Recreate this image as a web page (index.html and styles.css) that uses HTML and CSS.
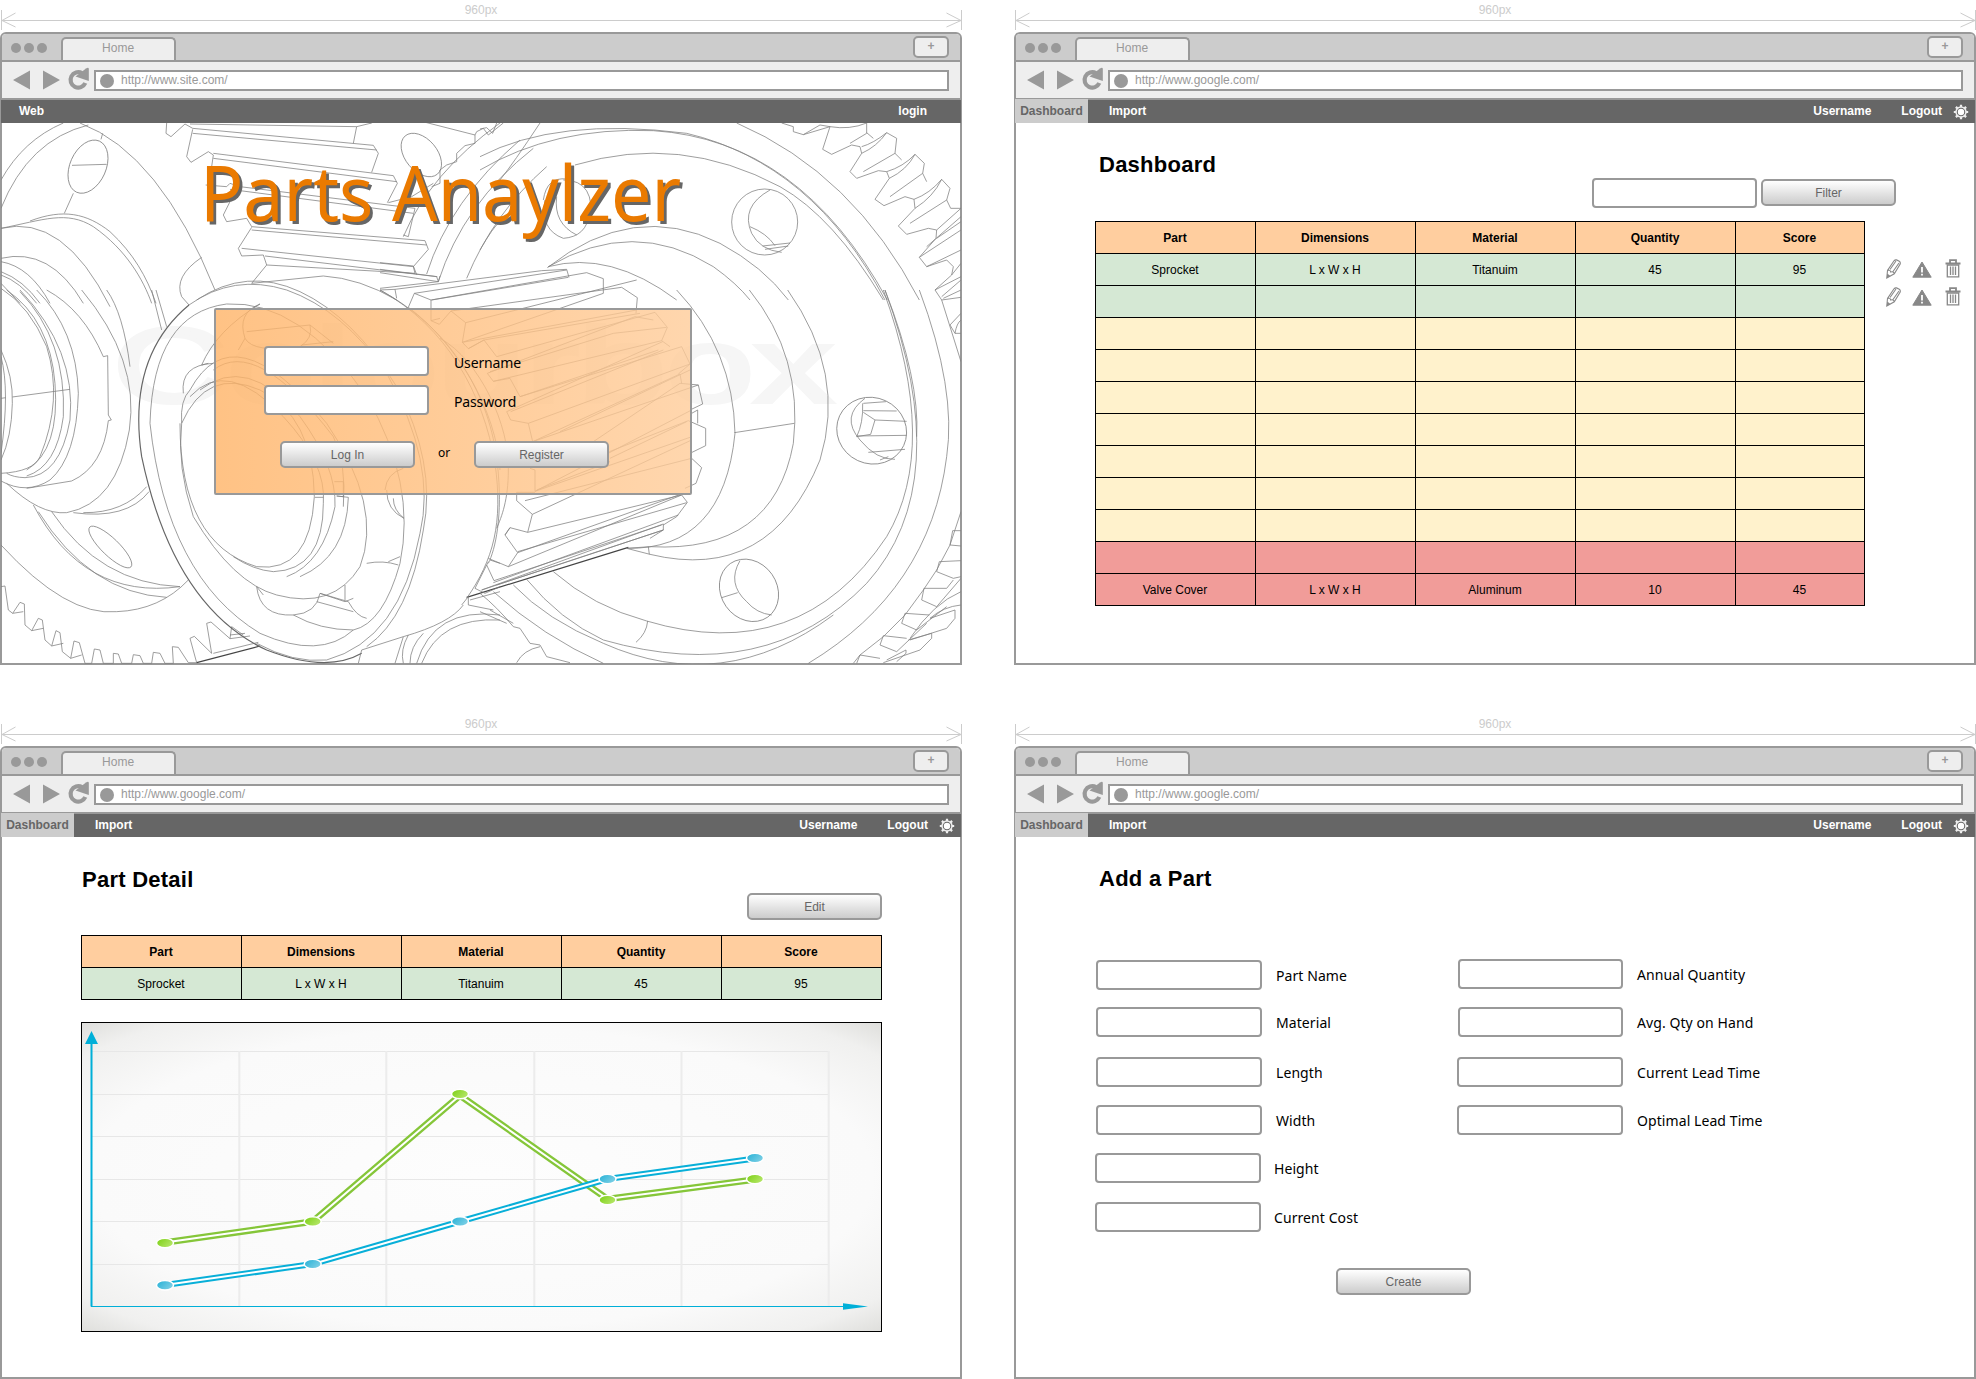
FILE: index.html
```html
<!DOCTYPE html>
<html lang="en">
<head>
<meta charset="utf-8">
<title>Parts Anaylzer</title>
<link rel="stylesheet" href="styles.css">
</head>
<body>
<svg width="0" height="0" class="defs">
  <symbol id="ruler" viewBox="0 0 962 32"><path d="M1.500 10V30M961.500 10V30M1 20.500H961M15.500 13L2 20.500L15.500 27M946.500 13L961 20.500L946.500 27" fill="none" stroke="#ccc"/></symbol>
  <symbol id="nav-icons" viewBox="0 0 80 26"><path d="M2 13L19 3.500V22.500ZM49 13L32 3.500V22.500Z" fill="#999"/><path d="M71 6.200A7.700 7.700 0 1 0 74.300 16" fill="none" stroke="#999" stroke-width="4.200"/><path d="M64.500 9.500L75 1.500Q77.800 0 77.800 2V14Z" fill="#999"/></symbol>
  <symbol id="cog" viewBox="0 0 16 16"><path d="M8 .8V15.200M.8 8H15.200M2.900 2.900L13.100 13.100M13.100 2.900L2.900 13.100" stroke="#eee" stroke-width="2.200"/><circle cx="8" cy="8" r="5" fill="#666" stroke="#eee" stroke-width="1.500"/><circle cx="8" cy="8" r="3.200" fill="#fff"/></symbol>
  <symbol id="pencil" viewBox="0 0 15 20"><path d="M.8 19L1.500 11.500L8 1.800Q9 .6 10.500 .9L13.300 2.200Q14.700 3.200 14.200 5L8.300 14.800ZM1.500 11.500Q4.300 10.500 4.700 13Q7.500 12 8.300 14.800M4 10.500L10 2M7 12.500L13 4" fill="none" stroke="#888" stroke-width="1.100"/><path d="M.8 19L1.200 14.500L4.500 17Z" fill="#888"/></symbol>
  <symbol id="warn" viewBox="0 0 20 17"><path d="M10 1L19.200 16.200H.8Z" fill="#888" stroke="#888" stroke-linejoin="round"/><path d="M10 6V11.500M10 12.800V14.600" stroke="#fff" stroke-width="1.800"/></symbol>
  <symbol id="trash" viewBox="0 0 16 19"><path d="M.5 4.500H15.500M5 3.800V1.200H11V3.800" fill="none" stroke="#888" stroke-width="1.800"/><path d="M2.300 6H13.700V17.800H2.300ZM5.500 7.500V16M8 7.500V16M10.500 7.500V16" fill="none" stroke="#888" stroke-width="1.300"/></symbol>
</svg>

<main class="board">

<section class="screen">
  <div class="ruler"><svg><use href="#ruler"/></svg><span>960px</span></div>
  <div class="window">
    <div class="tabs"><i></i><i></i><i></i><span class="tab">Home</span><span class="plus">+</span></div>
    <div class="tools"><svg class="arrows"><use href="#nav-icons"/></svg><div class="url"><i></i><span>http://www.site.com/</span></div></div>
    <nav class="nav login-nav"><b>Web</b><b>login</b></nav>
    <div class="hero">
      <svg class="art" viewBox="0 0 960 541" fill="none" stroke="#808080" stroke-width="2.300">
        <text x="112" y="279" textLength="720" lengthAdjust="spacingAndGlyphs" class="mark">Colourbox</text>
        <!-- upper left -->
        <g transform="translate(-1 -123) scale(.33333)">
          <path d="M3 540Q70 420 190 369M3 625Q85 420 265 375M240 369Q480 460 645 870M193 640L220 580M303 418L308 400M216 496L320 493"/>
          <ellipse cx="264" cy="500" rx="54" ry="84" transform="rotate(24 264 500)"/>
          <path d="M3 685C130 660 200 630 280 680C380 750 430 840 455 910M90 663C190 625 260 640 330 695C400 760 440 830 468 910M3 685Q190 640 330 920M3 775Q150 740 250 910M3 785Q90 800 150 910M3 815Q70 840 120 910M3 825Q60 845 110 910M3 850L60 910"/>
          <path d="M605 772Q520 830 545 890L567 915M500 369L498 400L513 410L555 372L578 385L1120 436L1135 460L1115 517M570 372L1070 380L1060 430M1070 380L1115 369M578 400L1130 450M578 388L560 470L573 487L625 455L640 465L635 500M640 460L1180 527L1192 550L1162 608M640 475L1190 545"/>
          <path d="M617 555L680 560L690 550L720 560L1245 625L1225 710L1210 705M690 568L1240 640M690 605L670 645L680 665L740 655L755 680L1275 722L1285 748L1240 800L1245 820M755 690L1280 735M755 682L715 745L725 768L790 765L800 795L755 850M725 745L1240 800M795 768L1310 830L1315 845M800 795L1245 820M755 850L970 828Q1080 835 1190 900M1165 608L1235 590M1235 590L1300 550"/>
          <ellipse cx="1264" cy="465" rx="48" ry="75" transform="rotate(-40 1264 465)"/>
          <path d="M1110 369L1210 350L1425 405L1430 395L1450 385L1465 405L1510 369M1425 405L1425 430L1395 437L1370 460V485L1340 495L1320 510V550L1295 560M1210 710Q1290 520 1500 369M1280 822Q1350 600 1560 420M1315 845Q1390 610 1600 445M1400 835Q1480 640 1640 500"/>
        </g>
        <!-- upper right -->
        <g transform="translate(479 -123) scale(.33333)">
          <path d="M0 470Q230 350 620 400Q1000 490 1215 900M0 510Q220 380 520 392Q960 420 1222 900M60 540Q100 490 180 369M285 495Q600 400 900 560Q1060 650 1210 900M0 750Q40 680 60 665M770 369Q1120 520 1318 900M202 803Q460 600 720 730Q850 800 925 900M205 800Q460 650 700 800Q770 850 810 900M205 800Q390 750 590 900"/>
          <circle cx="854" cy="666" r="99"/><path d="M870 570Q780 620 815 700Q840 750 905 757M810 680Q860 700 885 737M848 738L930 729M855 748L925 738M195 600Q180 690 250 715Q320 710 328 640M250 540Q350 540 330 670M190 600Q200 530 260 537M230 590Q220 670 290 705"/>
          <path d="M905 369L940 380V395L970 404L1050 380L1020 375L970 404M1050 380L1028 448L1055 463L1115 435L1140 440L1145 460L1110 515L1130 535L1195 512L1220 515L1228 535L1185 598L1212 617L1275 590L1302 598L1305 625L1255 678L1280 703L1345 685L1370 690L1368 715L1318 772L1340 800L1400 780L1420 800L1415 825L1365 870L1385 900"/>
          <path d="M1145 460Q1190 440 1220 398L1250 415L1245 460L1150 515M1145 440Q1180 430 1220 398M1160 369V400L1110 430M1160 398L1180 415M1228 535Q1280 510 1305 463L1333 490L1328 520L1230 590M1220 515Q1270 500 1305 463M1245 460L1265 480M1305 625Q1360 590 1385 538L1410 565L1400 600L1290 670M1302 598Q1350 580 1385 538M1328 520L1340 545M1370 715L1443 665M1370 690L1443 625H1412L1400 600M1340 740L1443 650M1415 825L1443 790M1340 800L1443 750M1318 772L1443 690M1365 870L1443 830M1385 900L1443 892M1050 380Q1110 390 1160 369M0 387L20 383L38 400L50 369"/>
        </g>
        <!-- pinion teeth and shaft edge -->
        <g transform="translate(379 127) scale(.33333)">
          <path d="M0 120L45 118L485 62L560 58L567 82M45 118L50 145M0 115L175 95L180 78M0 68L175 95M0 58L172 80M0 38L100 48L110 74M85 172L103 130L153 150L620 68L670 86V130M103 130L560 60M153 150V212L178 223L213 183L257 218L247 277L265 296L312 270L350 320M153 212L180 205M213 183L725 112L772 143L768 190M257 218L770 90M155 150L565 82M247 277L770 180M247 277L670 130M265 296L312 270L780 190"/>
          <path d="M350 320L825 187L862 232L845 272M322 370L765 200L820 210M322 370L340 394L390 385L420 440L905 290L930 342L895 372M330 365L700 250L860 232M340 394L845 272L870 290M380 485L848 275M380 485L392 510L445 520L458 575L955 405L968 462L930 480M420 440L835 300M392 485L850 300M445 520L930 342M458 575L900 372L905 400M540 545L930 360M640 575L900 400L955 405"/>
          <path d="M688 605L925 512L977 535V587L930 610M690 625L920 515M465 660V724L935 480M450 655L465 660M465 724L930 562M470 720L690 635M410 727H465M410 727V752L457 793L935 570M457 793L443 847L390 833L375 855L413 908L910 730M435 752L935 625L965 653L948 700L915 715M443 847L905 735L922 757L890 800L850 825M375 855L390 833M413 908L385 950L325 925M385 950L905 735M413 905L920 758M305 1020L850 822V840L810 865M320 945L342 992L845 825M340 998L895 795M350 1005L850 840M305 1020L850 840M935 490L953 480V520"/>
          <path d="M260 1042L745 892" stroke="#444" stroke-width="3.500"/>
          <path d="M0 120C200 230 310 430 345 640C370 820 340 930 260 1045M0 120C220 240 330 440 352 640C370 800 345 900 325 940M180 265C300 330 390 530 385 660C385 750 365 800 350 835M85 172C230 280 350 480 360 660"/>
        </g>
        <!-- lower left -->
        <g transform="translate(-1 167) scale(.33333)">
          <path d="M3 -5Q90 50 140 170Q190 330 120 500Q100 545 3 550M20 0Q150 90 165 280Q180 480 80 540M60 0Q230 180 210 390Q180 560 75 563Q40 562 20 550M60 5Q200 150 190 380Q170 530 80 558M110 0Q230 120 235 310Q230 500 150 570Q80 615 3 573M245 0Q420 210 388 420Q350 640 200 668Q120 675 20 580M320 0Q370 70 390 230M140 0Q250 60 310 200L323 197L325 375L334 390L325 392Q310 530 215 573L80 595M3 180Q40 260 37 340Q35 440 3 510M3 200Q30 300 3 490M3 325L18 323M37 321L210 298"/>
          <path d="M455 0L485 120M468 0L500 110M100 645Q250 930 540 890M155 665Q300 880 540 890M115 665Q270 910 500 922M3 765Q200 980 350 965Q480 960 565 870M250 668Q370 670 440 590M220 668Q380 690 447 605"/>
          <ellipse cx="331" cy="771" rx="26" ry="86" transform="rotate(-46 331 771)"/>
          <path d="M3 890L15 888L25 960L38 970L60 937L73 942L75 1005L95 1022L115 985L127 990L135 1050L155 1068L168 1022L180 1028L187 1085L212 1105L222 1053L238 1058L255 1120H275L283 1077L300 1080L310 1120H340V1090L355 1092L365 1120H395L400 1094L420 1097L430 1120H455L460 1087L480 1090L495 1120H520L517 1070L535 1072L565 1118H590L570 1045L583 1039L635 1090L620 1000L633 996L690 1046L695 1010L730 1035M38 970L70 965M95 1022L130 1015M155 1068L190 1060M212 1105L245 1095M690 1046L750 1038M690 1035L735 1030M640 1090L775 1057"/>
          <path d="M590 1118L780 1068" stroke="#444" stroke-width="3.500"/>
          <path d="M567 45Q380 200 425 500Q520 950 800 1080Q980 1150 1085 1090" stroke="#666" stroke-width="3.500"/>
          <path d="M567 45Q700 -50 860 0Q1030 60 1160 250Q1310 520 1260 730Q1200 1050 980 1110Q880 1120 770 1060M450 400Q460 70 680 42Q900 30 1100 320Q1250 580 1200 820Q1150 1000 1060 1020Q960 1110 780 1030Q500 860 450 400M590 30Q740 -70 900 5Q1060 80 1190 290Q1310 520 1270 720Q1230 980 1100 1070"/>
          <path d="M545 400Q540 330 570 300Q700 60 980 400Q1150 650 1080 830Q1000 960 830 915Q700 880 580 680Q530 530 545 400M540 400Q540 760 770 830Q930 850 943 620Q940 380 780 300Q620 230 545 400M570 320Q680 200 850 380Q980 520 970 640Q970 840 820 845Q760 840 700 800M600 300Q740 190 900 380Q1010 530 1005 650Q970 820 860 860M640 240Q770 140 1000 440Q1040 520 1030 650M1003 575H1030V620L1010 618M1010 618L1045 622Q1040 800 900 860M945 622H970"/>
          <path d="M780 42Q650 120 605 225L625 220M780 42Q710 70 735 145Q760 190 900 170Q940 145 930 105L740 125M735 145L715 180M905 165L1000 155M930 105L1000 160M550 310Q540 225 640 220M1160 600Q1160 660 1212 685M1180 625Q1180 660 1212 685M1155 600Q1160 550 1210 535M1100 820Q1150 810 1195 825M1165 815L1200 800M770 890Q780 980 880 975Q950 970 960 910M770 890L790 915M960 910L1035 935L1060 925M960 910L1045 935Q1070 980 1100 985M1035 885V930M950 935L1060 965M880 975Q960 1020 1060 1020"/>
          <path d="M1470 810L1500 820M1465 815L1425 895L1455 910L1500 890M1410 930L1500 905M1390 945Q1350 1000 1210 1040L1085 1080L1075 1120M1210 1040L1185 1120M1225 1035Q1200 1080 1210 1120M1270 1030Q1230 1070 1230 1120M1250 1120Q1300 950 1500 975M1265 1120Q1320 980 1500 990M1385 945L1405 920V945L1480 960"/>
        </g>
        <!-- lower right -->
        <g transform="translate(479 167) scale(.33333)">
          <path d="M0 910Q50 950 100 1010L120 1015L150 1060L180 1065L200 1100L270 1118M30 960L100 1000M110 1118Q130 1080 180 1070M0 965L80 1000"/>
          <path d="M590 0Q760 180 765 430Q730 780 440 775M808 0Q970 200 940 460Q880 790 510 770L440 775M923 0Q1100 250 1020 510Q870 880 510 793L440 775M763 428L943 400M505 770L508 793"/>
          <path d="M1210 0Q1380 470 1220 740Q960 1130 500 993Q340 950 220 845M1215 0Q1430 580 1160 880Q860 1190 370 1050Q240 990 140 868M1215 0Q1320 270 1310 440M1060 975Q730 1220 370 1060Q200 990 100 885M1318 0Q1430 300 1400 500Q1350 900 985 1120M370 1120Q190 1040 40 905M503 993Q500 1030 468 1057"/>
          <ellipse cx="1175" cy="422" rx="106" ry="99" transform="rotate(25 1175 422)"/><path d="M1155 325Q1080 380 1140 450Q1190 510 1245 508M1148 340Q1150 400 1130 440L1172 433L1185 390L1150 367M1150 340L1218 335M1150 362L1250 363M1185 390L1280 394M1130 438L1280 436M1165 487L1275 478M1200 510L1225 500"/>
          <ellipse cx="807" cy="901" rx="84" ry="98" transform="rotate(-35 807 901)"/><path d="M780 812Q740 880 800 935Q830 970 875 975M725 923L773 908"/>
          <path d="M1385 30L1443 215M1385 20L1443 -30M1390 25L1443 0M1410 105L1443 70M1410 105L1425 130H1443M1425 130Q1430 100 1443 90M1443 665L1410 765L1370 840L1330 900L1275 975L1210 1040L1140 1095L1120 1120M1443 722H1418L1410 765L1443 768M1443 812L1378 815L1370 845L1420 865L1443 860M1400 895L1332 895L1325 930L1370 950L1443 865M1348 975L1275 970L1265 1000L1310 1020L1400 950M1280 1045L1210 1037L1200 1065L1250 1085L1340 1000M1200 1105L1140 1095L1130 1120M1350 985L1425 960V985L1400 1015L1290 1050M1285 1050L1355 1030V1045L1320 1080L1210 1118M1220 1110L1278 1080V1090L1250 1115M1420 870L1400 895M1290 1045Q1360 940 1443 905M1350 985Q1390 950 1443 945"/>
        </g>
      </svg>
      <h1 class="brand">Parts Anaylzer</h1>
      <form class="login">
        <label class="cred"><span class="input"></span>Username</label>
        <label class="cred"><span class="input"></span>Password</label>
        <div class="choices"><span class="btn">Log In</span><span class="or">or</span><span class="btn">Register</span></div>
      </form>
    </div>
  </div>
</section>

<section class="screen">
  <div class="ruler"><svg><use href="#ruler"/></svg><span>960px</span></div>
  <div class="window">
    <div class="tabs"><i></i><i></i><i></i><span class="tab">Home</span><span class="plus">+</span></div>
    <div class="tools"><svg class="arrows"><use href="#nav-icons"/></svg><div class="url"><i></i><span>http://www.google.com/</span></div></div>
    <nav class="nav"><b class="active">Dashboard</b><b class="import">Import</b><b class="user">Username</b><b>Logout</b><svg class="cog"><use href="#cog"/></svg></nav>
    <div class="page dash">
      <h2>Dashboard</h2>
      <div class="filter"><span class="input"></span><span class="btn">Filter</span></div>
      <div class="listing">
        <div class="table narrow">
          <b>Part</b><b>Dimensions</b><b>Material</b><b>Quantity</b><b>Score</b>
          <span class="g">Sprocket</span><span class="g">L x W x H</span><span class="g">Titanuim</span><span class="g">45</span><span class="g">95</span>
          <span class="g"></span><span class="g"></span><span class="g"></span><span class="g"></span><span class="g"></span>
          <span></span><span></span><span></span><span></span><span></span>
          <span></span><span></span><span></span><span></span><span></span>
          <span></span><span></span><span></span><span></span><span></span>
          <span></span><span></span><span></span><span></span><span></span>
          <span></span><span></span><span></span><span></span><span></span>
          <span></span><span></span><span></span><span></span><span></span>
          <span></span><span></span><span></span><span></span><span></span>
          <span class="r"></span><span class="r"></span><span class="r"></span><span class="r"></span><span class="r"></span>
          <span class="r">Valve Cover</span><span class="r">L x W x H</span><span class="r">Aluminum</span><span class="r">10</span><span class="r">45</span>
        </div>
        <div class="actions">
          <div><svg width="15" height="20"><use href="#pencil"/></svg><svg width="20" height="17"><use href="#warn"/></svg><svg width="16" height="19"><use href="#trash"/></svg></div>
          <div><svg width="15" height="20"><use href="#pencil"/></svg><svg width="20" height="17"><use href="#warn"/></svg><svg width="16" height="19"><use href="#trash"/></svg></div>
        </div>
      </div>
    </div>
  </div>
</section>

<section class="screen">
  <div class="ruler"><svg><use href="#ruler"/></svg><span>960px</span></div>
  <div class="window">
    <div class="tabs"><i></i><i></i><i></i><span class="tab">Home</span><span class="plus">+</span></div>
    <div class="tools"><svg class="arrows"><use href="#nav-icons"/></svg><div class="url"><i></i><span>http://www.google.com/</span></div></div>
    <nav class="nav"><b class="active">Dashboard</b><b class="import">Import</b><b class="user">Username</b><b>Logout</b><svg class="cog"><use href="#cog"/></svg></nav>
    <div class="page detail">
      <h2>Part Detail</h2>
      <div class="edit"><span class="btn">Edit</span></div>
      <div class="table">
        <b>Part</b><b>Dimensions</b><b>Material</b><b>Quantity</b><b>Score</b>
        <span class="g">Sprocket</span><span class="g">L x W x H</span><span class="g">Titanuim</span><span class="g">45</span><span class="g">95</span>
      </div>
      <svg class="chart" viewBox="82 1023 799 308">
        <defs>
          <radialGradient id="paper" cx=".5" cy=".5" r=".72"><stop offset="0" stop-color="#fdfdfd"/><stop offset=".68" stop-color="#fafafa"/><stop offset=".88" stop-color="#f0f0ef"/><stop offset="1" stop-color="#dcdcd9"/></radialGradient>
          <linearGradient id="gd" x1="0" x2="1" y2=".6"><stop offset="0" stop-color="#78cf10"/><stop offset="1" stop-color="#b5e668"/></linearGradient>
          <linearGradient id="bd" x1="0" x2="1" y2=".6"><stop offset="0" stop-color="#22b0d6"/><stop offset="1" stop-color="#7ccfe5"/></linearGradient>
        </defs>
        <rect x="82" y="1023" width="799" height="308" fill="url(#paper)"/>
        <path d="M92 1051.500H829M92 1094.500H829M92 1136.500H829M92 1179.500H829M92 1221.500H829M92 1264.500H829" stroke="#e7e7e7" fill="none"/>
        <path d="M239.300 1051V1306M386.300 1051V1306M534.300 1051V1306M681.500 1051V1306M828.700 1051V1306" stroke="#ececec" stroke-width="2" fill="none"/>
        <path d="M91.500 1040V1306.500" stroke="#00afd8" stroke-width="2"/><path d="M91 1306.500H846" stroke="#00afd8"/>
        <path d="M91.500 1031L98 1044H85ZM843 1303.300L868 1306.500L843 1309.700Z" fill="#00afd8"/>
        <g fill="none">
          <path d="M165 1242.500L312.700 1221.500L460 1095.500L607.500 1199L755 1179.500" stroke="#85c639" stroke-width="6.600"/>
          <path d="M165 1242.500L312.700 1221.500L460 1095.500L607.500 1199L755 1179.500" stroke="#fff" stroke-width="2"/>
          <path d="M165 1285L312.700 1264L460 1221.500L607.500 1179L755 1158.500" stroke="#08afd8" stroke-width="6"/>
          <path d="M165 1285L312.700 1264L460 1221.500L607.500 1179L755 1158.500" stroke="#fff" stroke-width="2"/>
        </g>
        <g fill="url(#gd)" stroke="#fff" stroke-width="1.500"><ellipse cx="165" cy="1243" rx="8.500" ry="4.800"/><ellipse cx="312.700" cy="1221.500" rx="8.500" ry="4.800"/><ellipse cx="460" cy="1094" rx="8.500" ry="4.800"/><ellipse cx="607.500" cy="1200" rx="8.500" ry="4.800"/><ellipse cx="755" cy="1179" rx="8.500" ry="4.800"/></g>
        <g fill="url(#bd)" stroke="#fff" stroke-width="1.500"><ellipse cx="165" cy="1285.300" rx="8.500" ry="4.800"/><ellipse cx="312.700" cy="1264" rx="8.500" ry="4.800"/><ellipse cx="460" cy="1221.500" rx="8.500" ry="4.800"/><ellipse cx="607.500" cy="1179" rx="8.500" ry="4.800"/><ellipse cx="755" cy="1158" rx="8.500" ry="4.800"/></g>
      </svg>
    </div>
  </div>
</section>

<section class="screen">
  <div class="ruler"><svg><use href="#ruler"/></svg><span>960px</span></div>
  <div class="window">
    <div class="tabs"><i></i><i></i><i></i><span class="tab">Home</span><span class="plus">+</span></div>
    <div class="tools"><svg class="arrows"><use href="#nav-icons"/></svg><div class="url"><i></i><span>http://www.google.com/</span></div></div>
    <nav class="nav"><b class="active">Dashboard</b><b class="import">Import</b><b class="user">Username</b><b>Logout</b><svg class="cog"><use href="#cog"/></svg></nav>
    <div class="page add">
      <h2>Add a Part</h2>
      <div class="fields">
        <div class="col">
          <label><span class="input"></span>Part Name</label>
          <label class="m17"><span class="input"></span>Material</label>
          <label class="m20"><span class="input"></span>Length</label>
          <label class="m18"><span class="input"></span>Width</label>
          <label class="m18 out"><span class="input"></span>Height</label>
          <label class="m19 out"><span class="input"></span>Current Cost</label>
        </div>
        <div class="col second">
          <label><span class="input"></span>Annual Quantity</label>
          <label class="m18"><span class="input"></span>Avg. Qty on Hand</label>
          <label class="m20 out wide"><span class="input"></span>Current Lead Time</label>
          <label class="m18 out wide"><span class="input"></span>Optimal Lead Time</label>
        </div>
      </div>
      <span class="btn create">Create</span>
    </div>
  </div>
</section>

</main>
</body>
</html>
```
FILE: styles.css
```css
* { box-sizing: border-box; }
body { margin: 0; background: #fff; font: 12px/14px "Liberation Sans", Arial, sans-serif; color: #000; }
.defs { position: absolute; }
svg { display: block; flex: none; }
.board { display: grid; grid-template-columns: 962px 962px; grid-template-rows: 665px 665px; gap: 49px 52px; width: 1976px; height: 1379px; overflow: hidden; }
.screen { display: flex; flex-direction: column; }

.ruler { height: 32px; display: grid; }
.ruler > * { grid-area: 1 / 1; }
.ruler svg { width: 962px; height: 32px; }
.ruler span { justify-self: center; margin-top: 3px; color: #ccc; }

.window { height: 633px; border: 2px solid #999; border-radius: 6px 6px 0 0; }
.tabs { height: 28px; border-bottom: 2px solid #999; background: #ccc; border-radius: 4px 4px 0 0; display: flex; align-items: center; padding: 0 11px 0 8.500px; gap: 3.200px; color: #999; }
.tabs i { width: 10px; height: 10px; border-radius: 50%; background: #999; margin-top: 2px; }
.tab { align-self: flex-end; width: 115px; height: 23px; margin-left: 10.500px; border: 2px solid #999; border-bottom: 0; border-radius: 5px 5px 0 0; background: #eee; text-align: center; line-height: 18px; }
.plus { margin-left: auto; width: 36px; height: 22px; border: 2px solid #999; border-radius: 5px; background: #eee; text-align: center; font-weight: bold; line-height: 16px; }
.tools { height: 38px; border-bottom: 2px solid #999; background: #eee; display: flex; padding: 5px 11px 0 9px; }
.arrows { width: 80px; height: 26px; }
.url { flex: 1; height: 21px; margin: 3px 0 0 3px; border: 2px solid #999; background: #fff; display: flex; align-items: center; padding-left: 4px; gap: 7px; color: #999; }
.url i { width: 14px; height: 14px; border-radius: 50%; background: #999; }
.url span { padding-bottom: 2px; }
.nav { height: 23px; margin: 0 -1px; background: #666; color: #fff; display: flex; align-items: center; padding: 0 6px 1px 0; }
.nav .active { width: 73px; height: 24px; margin: -1px 0 -1px; background: #ccc; color: #666; text-align: center; line-height: 24px; }
.nav .import { margin: 0 auto 0 21px; }
.nav .user { margin-right: 30px; }
.nav .cog { width: 16px; height: 16px; margin: 1px 0 0 11px; }
.nav.login-nav { justify-content: space-between; padding: 0 34px 1px 18px; }

.input { display: block; flex: none; width: 165px; height: 30px; border: 2px solid #999; border-radius: 4px; background: #fff; }
.btn { display: block; flex: none; width: 135px; height: 27px; border: 2px solid #999; border-radius: 5px; background: linear-gradient(#fff, #ccc); color: #666; text-align: center; line-height: 24px; }
h2 { margin: 0; font-size: 22px; line-height: 24px; letter-spacing: .25px; }

.hero { height: 541px; margin: 0 -1px; display: grid; grid-template: 541px / 960px; overflow: hidden; }
.hero > * { grid-area: 1 / 1; }
.art { width: 960px; height: 541px; }
.mark { font: 105px "Liberation Sans", Arial, sans-serif; fill: #f6f6f6; stroke: #f6f6f6; stroke-width: 4px; }
.brand { margin: 17px 0 0 199px; width: 600px; height: 100px; font: 400 76px/104px "Noto Sans", sans-serif; color: #ea7a00; text-shadow: 3px 3px 0 #666; transform: scaleX(.943); transform-origin: 0 0; white-space: nowrap; }
.login { width: 478px; height: 187px; margin: 185px 0 0 213px; border: 2px solid #999; border-radius: 2px; background: linear-gradient(90deg, rgba(255,179,102,.8), rgba(255,204,153,.8)); padding: 36px 47px 0 48px; }
.cred { display: flex; gap: 25px; font: 14px/33px "Noto Sans", sans-serif; height: 30px; margin-bottom: 9px; letter-spacing: -.15px; }
.choices { display: flex; margin: 26px 0 0 16px; }
.or { width: 59px; text-align: center; padding-right: 1px; font: 12px/23px "Noto Sans", sans-serif; }

.dash { padding: 30px 0 0 79px; }
.dash h2 { margin-left: 4px; }
.filter { display: flex; gap: 4px; margin: 1px 0 0 497px; }
.filter .btn { margin-top: 1px; }
.listing { display: flex; margin-top: 13px; }
.table { display: grid; grid-template-columns: repeat(5, 159px); grid-auto-rows: 31px; gap: 1px; padding: 1px; background: #000; width: max-content; text-align: center; line-height: 32px; }
.table.narrow { grid-template-columns: repeat(4, 159px) 128px; }
.table b { background: #ffce9f; }
.table span { background: #fff2cc; }
.table .g { background: #d5e8d4; }
.table .r { background: #f19c99; }
.table b, .table span { padding-right: 1px; overflow: hidden; }
.actions { margin: 38px 0 0 21px; }
.actions div { display: flex; height: 28px; align-items: flex-start; }
.actions svg:nth-child(2) { margin: 2px 13px 0 11px; }

.detail { padding: 31px 0 0 79px; }
.detail h2 { margin-left: 1px; }
.edit { margin: 1px 0 15px 666px; }
.chart { width: 801px; height: 310px; margin-top: 22px; border: 1px solid #000; }

.add { padding: 30px 0 0 80px; }
.add h2 { margin-left: 3px; }
.fields { display: flex; margin-top: 68px; height: 273px; }
.col { width: 362px; padding-top: 1px; font: 14px/31px "Noto Sans", sans-serif; letter-spacing: .08px; }
.col.second { padding-top: 0; width: 400px; }
.col label { display: flex; height: 30px; gap: 14px; }
.col .input { width: 166px; }
.second .input { width: 165px; }
.col .out { margin-left: -1px; gap: 13px; }
.second .wide { gap: 14px; }
.wide .input { width: 166px; }
.m17 { margin-top: 17px; }
.m18 { margin-top: 18px; }
.m19 { margin-top: 19px; }
.m20 { margin-top: 20px; }
.create { margin: 36px 0 0 240px; }
```
